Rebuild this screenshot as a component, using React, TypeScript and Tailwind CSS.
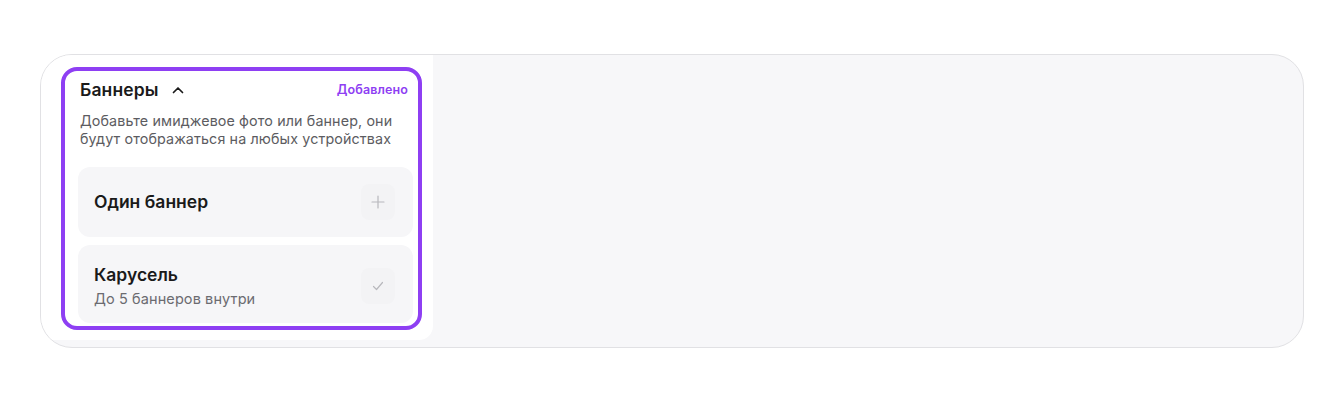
import React from 'react';

function PlusIcon() {
    return (
        <svg width="16" height="16" viewBox="0 0 16 16" fill="none">
            <path d="M8 2v12M2 8h12" stroke="#b8b8bd" strokeWidth="1.2" strokeLinecap="round" />
        </svg>
    );
}

function CheckIcon() {
    return (
        <svg width="14" height="14" viewBox="0 0 14 14" fill="none">
            <path d="M2.5 7.5l3 3 6-7" stroke="#b8b8bd" strokeWidth="1.2" strokeLinecap="round" strokeLinejoin="round" />
        </svg>
    );
}

export default function App() {
    return (
        <div className="w-[1344px] h-[402px] bg-white pt-[54px] px-[40px] font-['Inter',sans-serif]">
            <div className="h-[294px] rounded-[32px] border border-[#e1e1e4] bg-[#f7f7f9] overflow-hidden">
                {/* Left panel */}
                <div className="w-[392px] h-[285px] bg-white rounded-br-[14px] pt-[12px] pl-[20px]">
                    <div className="w-[361px] h-[263px] rounded-[16px] border-4 border-[#8e3ff3] overflow-hidden pt-[8px] pl-[13px] pr-[5px]">
                        {/* Header */}
                        <div className="flex items-center justify-between pl-[2px] pr-[5px] h-[22px]">
                            <div className="flex items-center gap-[13px]">
                                <span className="text-[17.5px] font-semibold text-[#1a1a1a] tracking-[0.1px]">Баннеры</span>
                                <svg width="14" height="14" viewBox="0 0 14 14" fill="none">
                                    <path d="M2.5 9.5l4.5-4.5 4.5 4.5" stroke="#1a1a1a" strokeWidth="1.7" strokeLinecap="round" strokeLinejoin="round" />
                                </svg>
                            </div>
                            <span className="text-[12.5px] font-semibold text-[#8e3ff3] tracking-[0.1px]">Добавлено</span>
                        </div>
                        <p className="mt-[11px] pl-[2px] w-[330px] text-[14.3px] leading-[18px] text-[#5c5c61] tracking-[0.12px]">
                            Добавьте имиджевое фото или баннер, они будут отображаться на любых устройствах
                        </p>

                        {/* Options */}
                        <div className="mt-[19px] flex flex-col gap-[8px]">
                            <div className="h-[70px] rounded-[12px] bg-[#f6f6f8] flex items-center justify-between pl-[16px] pr-[18px]">
                                <span className="text-[17.5px] font-semibold text-[#1a1a1a]">Один баннер</span>
                                <div className="w-[34px] h-[36px] rounded-[8px] bg-[#f3f3f5] flex items-center justify-center">
                                    <PlusIcon />
                                </div>
                            </div>
                            <div className="h-[78px] rounded-[12px] bg-[#f6f6f8] flex items-center justify-between pl-[16px] pr-[18px] pt-[3px]">
                                <div className="flex flex-col">
                                    <span className="text-[17.5px] font-semibold text-[#1a1a1a] leading-[22px]">Карусель</span>
                                    <span className="mt-[4px] text-[14.5px] text-[#6b6b70] leading-[18px] tracking-[0.1px]">До 5 баннеров внутри</span>
                                </div>
                                <div className="w-[34px] h-[36px] rounded-[8px] bg-[#f3f3f5] flex items-center justify-center">
                                    <CheckIcon />
                                </div>
                            </div>
                        </div>
                    </div>
                </div>
            </div>
        </div>
    );
}
